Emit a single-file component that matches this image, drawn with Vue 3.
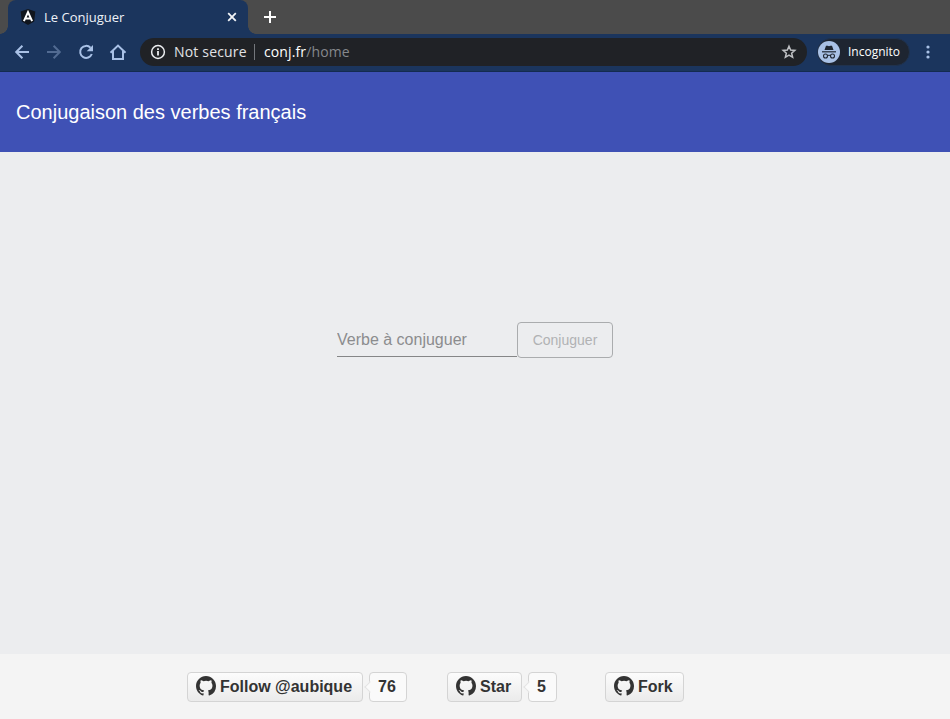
<script setup>
import { ref } from 'vue'

const verb = ref('')
const groups = [
  { label: 'Follow @aubique', count: '76', kind: 'follow' },
  { label: 'Star', count: '5', kind: 'star' },
  { label: 'Fork', count: '', kind: 'fork' },
]
</script>

<template>
  <div class="window">
    <header class="tabs">
      <div class="tab">
        <svg class="favicon" width="16" height="16" viewBox="0 0 16 16">
          <path d="M8 0 15.3 2.6 14.2 12.4 8 16 1.8 12.4.7 2.6Z" fill="#10151d" />
          <path d="M3.9 12.2 8 3.2l4.1 9M5.6 9.4h4.8" fill="none" stroke="#fff" stroke-width="2" />
        </svg>
        <span class="tab-title">Le Conjuguer</span>
        <svg width="10" height="10" viewBox="0 0 10 10"><path d="m1.2 1.2 7.6 7.6m0-7.6L1.2 8.8" stroke="#f3f5f8" stroke-width="1.8" /></svg>
      </div>
      <svg class="new-tab" width="12" height="12" viewBox="0 0 12 12"><path d="M6 0v12M0 6h12" stroke="#fff" stroke-width="2" /></svg>
    </header>
    <nav class="toolbar">
      <svg class="nav-icon" viewBox="0 0 20 20"><path d="M17 10H4.5M10.4 3.7 4.2 10l6.2 6.3" /></svg>
      <svg class="nav-icon dim" viewBox="0 0 20 20"><path d="M3 10h12.5M9.6 3.7l6.2 6.3-6.2 6.3" /></svg>
      <svg class="nav-icon" viewBox="0 0 20 20"><path d="M14.5 5.7A6 6 0 1 0 15.8 12" /><path class="solid" d="M17 3v6.3h-6.3z" /></svg>
      <svg class="nav-icon home" viewBox="0 0 20 20"><path d="M2.5 10.8 10 3.6l7.5 7.2M5 9v8h10V9" /></svg>
      <div class="address">
        <svg class="info" width="16" height="16" viewBox="0 0 16 16"><circle cx="8" cy="8" r="6.4" fill="none" stroke="#eceef1" stroke-width="1.5" /><path d="M8 7v4.5M8 4.2v1.7" stroke="#eceef1" stroke-width="1.8" /></svg>
        <span class="security">Not secure</span>
        <span class="separator"></span>
        <span class="url">conj.fr<span class="path">/home</span></span>
        <svg class="star-icon" width="18" height="18" viewBox="0 0 18 18"><path d="m9 3.2 1.65 3.85 4.2.37-3.2 2.75.97 4.1L9 12.1l-3.62 2.17.97-4.1-3.2-2.75 4.2-.37z" fill="none" stroke="#bfc1c4" stroke-width="1.5" /></svg>
      </div>
      <div class="incognito">
        <svg width="22" height="22" viewBox="0 0 22 22">
          <circle cx="11" cy="11" r="11" fill="#a9c1e6" />
          <path d="M6.5 9 8 4.8h1.7l1.3.5 1.3-.5H14L15.5 9z" fill="#202733" />
          <path d="M4 10.8h14" stroke="#202733" stroke-width="1.2" />
          <g fill="none" stroke="#202733" stroke-width="1.1"><circle cx="7.5" cy="15" r="2" /><circle cx="14.5" cy="15" r="2" /><path d="M9.5 14.6q1.5-.7 3 0" /></g>
        </svg>
        <span>Incognito</span>
      </div>
      <svg class="more" width="4" height="14" viewBox="0 0 4 14" fill="#a9c1e6"><circle cx="2" cy="2" r="1.6" /><circle cx="2" cy="7" r="1.6" /><circle cx="2" cy="12" r="1.6" /></svg>
    </nav>
    <div class="app-bar"><h1>Conjugaison des verbes français</h1></div>
    <main>
      <form @submit.prevent>
        <input v-model="verb" type="text" placeholder="Verbe à conjuguer" />
        <button type="submit" :disabled="!verb">Conjuguer</button>
      </form>
    </main>
    <footer>
      <div v-for="item in groups" :key="item.kind" class="github" :class="item.kind">
        <a class="github-button">
          <svg width="20" height="20" viewBox="0 0 40 40"><path fill="#333" fill-rule="evenodd" d="M20 0C9 0 0 9 0 20c0 8.8 5.7 16.3 13.7 19 1 .2 1.4-.4 1.4-1v-3.4c-5.6 1.2-6.8-2.7-6.8-2.7-.9-2.3-2.2-2.9-2.2-2.9-1.8-1.2.1-1.2.1-1.2 2 .1 3.1 2.1 3.1 2.1 1.8 3 4.7 2.2 5.8 1.7.2-1.3.7-2.2 1.3-2.7-4.4-.5-9.1-2.2-9.1-9.9 0-2.2.8-4 2.1-5.4-.2-.5-.9-2.5.2-5.3 0 0 1.7-.5 5.5 2.1a19 19 0 0 1 10 0c3.8-2.6 5.5-2.1 5.5-2.1 1.1 2.8.4 4.8.2 5.3 1.3 1.4 2.1 3.2 2.1 5.4 0 7.7-4.7 9.4-9.1 9.9.7.6 1.4 1.8 1.4 3.7V38c0 .6.3 1.2 1.4 1A20 20 0 0 0 40 20C40 9 31 0 20 0" /></svg>
          <span>{{ item.label }}</span>
        </a>
        <a v-if="item.count" class="count">{{ item.count }}</a>
      </div>
    </footer>
  </div>
</template>

<style>
body { margin: 0; }
</style>

<style scoped>
* { box-sizing: border-box; }
svg { display: block; flex: none; }
.window { width: 950px; height: 719px; display: flex; flex-direction: column; overflow: hidden; background: #ecedef; font-family: "Liberation Sans", Arial, sans-serif; }
.tabs { height: 34px; flex: none; display: flex; align-items: center; padding-left: 8px; background: #4b4b4b; font-family: "Open Sans", "Noto Sans", sans-serif; }
.tab { position: relative; width: 240px; height: 34px; display: flex; align-items: center; padding: 0 11px 0 12px; border-radius: 8px 8px 0 0; background: #1b355d; color: #eef2f8; font-size: 13px; }
.tab::before, .tab::after { content: ""; position: absolute; bottom: 0; width: 8px; height: 8px; }
.tab::before { left: -8px; background: radial-gradient(circle at 0 0, transparent 7.5px, #1b355d 8px); }
.tab::after { right: -8px; background: radial-gradient(circle at 100% 0, transparent 7.5px, #1b355d 8px); }
.tab-title { flex: 1; margin-left: 8px; }
.new-tab { margin-left: 16px; }
.toolbar { height: 38px; flex: none; display: flex; align-items: center; padding: 0 20px 2px 12px; background: #1b355d; border-bottom: 1px solid #142b50; font-family: "Open Sans", "Noto Sans", sans-serif; }
.nav-icon { width: 20px; height: 20px; margin-right: 12px; fill: none; stroke: #a9c1e6; stroke-width: 2; }
.nav-icon.dim { stroke: #526b92; }
.solid { fill: #a9c1e6; stroke: none; }
.address { width: 667px; height: 28px; display: flex; align-items: center; padding: 0 9px 0 10px; border-radius: 14px; background: #202226; color: #e1e3e6; font-size: 14px; }
.security { width: 73px; margin-left: 8px; letter-spacing: 0.18px; white-space: nowrap; }
.separator { width: 1px; height: 16px; margin: 0 9px 0 7px; background: #74777c; }
.url { flex: 1; color: #fff; letter-spacing: 0.12px; }
.path { color: #85888c; }
.incognito { width: 93px; height: 28px; margin-left: 10px; display: flex; align-items: center; gap: 8px; border-radius: 14px; background: #1e2531; border: 1px solid #20324d; color: #fff; font-size: 12px; }
.more { margin-left: auto; }
.app-bar { height: 80px; flex: none; display: flex; align-items: center; padding: 0 16px; background: #3f51b5; color: #fff; }
h1 { margin: 0; font-size: 20px; line-height: 32px; font-weight: 400; }
main { flex: 1; padding-top: 170px; display: flex; justify-content: center; align-items: flex-start; }
form { display: flex; }
input { width: 180px; height: 35px; padding: 2px 0 0; border: 0; border-bottom: 1px solid #858687; border-radius: 0; outline: 0; background: transparent; font: 16px "Liberation Sans", Arial, sans-serif; }
input::placeholder { color: #8b8c8e; opacity: 1; }
button { width: 96px; height: 36px; padding: 0; border: 1px solid #aaacae; border-radius: 4px; background: transparent; color: #b1b2b4; font: 14px "Liberation Sans", Arial, sans-serif; }
footer { height: 65px; flex: none; display: flex; align-items: flex-start; padding: 18px 0 0 187px; background: #f4f4f4; color: #333; font-size: 16px; font-weight: 700; line-height: 28px; }
.github { display: flex; gap: 6px; }
.github.star { margin-left: 40px; }
.github.fork { margin-left: 48px; }
.github-button { width: 176px; height: 30px; display: flex; align-items: center; gap: 4px; padding-left: 8px; border: 1px solid #d4d4d4; border-radius: 4px; background: linear-gradient(#fcfcfc, #ebebeb); white-space: nowrap; }
.github-button svg { margin-bottom: 2px; }
.star .github-button { width: 75px; }
.fork .github-button { width: 79px; }
.count { position: relative; width: 38px; height: 30px; padding-right: 2px; border: 1px solid #d4d4d4; border-radius: 4px; background: #fafafa; text-align: center; }
.star .count { width: 29px; }
.count::before { content: ""; position: absolute; left: -4px; top: 10px; width: 7px; height: 7px; transform: rotate(45deg); border-left: 1px solid #e3e3e3; border-bottom: 1px solid #e3e3e3; background: #fafafa; }
</style>
